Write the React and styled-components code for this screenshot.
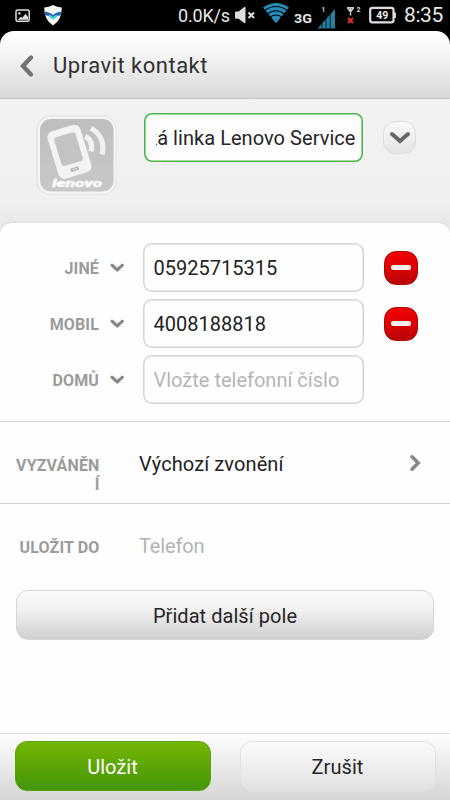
import React from "react";
import styled, { createGlobalStyle } from "styled-components";

const GlobalStyle = createGlobalStyle`
  *, *::before, *::after { box-sizing: border-box; }
  body { margin: 0; background: #000; font-family: Roboto, "Noto Sans", sans-serif; }
  button, input { font-family: inherit; margin: 0; }
  svg { display: block; flex: none; }
`;

const Screen = styled.div`
  display: flex;
  flex-direction: column;
  width: 450px;
  height: 800px;
  overflow: hidden;
  background: #000;
  color: #262626;
`;

const StatusBar = styled.div`
  display: flex;
  align-items: center;
  height: 31px;
  flex: none;
  padding: 0 7px 0 15px;
  color: #e8e8e8;
`;

const Notifications = styled.div`
  display: flex;
  gap: 13px;
  flex: 1;
`;

const Speed = styled.span`
  font-size: 18px;
  line-height: 33px;
  width: 57px;
  white-space: nowrap;
  letter-spacing: -0.2px;
`;

const Clock = styled.span`
  font-size: 21px;
  line-height: 33px;
  width: 39px;
  white-space: nowrap;
  margin-left: 7px;
  letter-spacing: -0.4px;
`;

const Header = styled.header`
  display: flex;
  align-items: center;
  flex: none;
  height: 68px;
  padding: 3px 0 0 19px;
  gap: 18px;
  border-radius: 14px 14px 0 0;
  border-bottom: 1px solid #c6c6c6;
  background: linear-gradient(#fff, #f5f5f5 35%, #d7d7d7);
`;

const Title = styled.h1`
  margin: 0;
  font-size: 22px;
  font-weight: 400;
  line-height: 28px;
  color: #303030;
  white-space: nowrap;
  letter-spacing: 0.5px;
`;

const Content = styled.main`
  display: flex;
  flex-direction: column;
  flex: 1;
  background: linear-gradient(#f2f2f2, #f0f0f0 100px, #e9e9e9 124px);
`;

const Profile = styled.section`
  display: flex;
  align-items: flex-start;
  height: 124px;
  flex: none;
  padding: 14px 0 0 35px;
`;

const NameField = styled.div`
  display: flex;
  justify-content: flex-end;
  align-items: center;
  width: 219px;
  height: 49px;
  margin-left: 26.5px;
  padding: 0 7px 0 10px;
  border-radius: 8px;
  box-shadow: inset 0 0 0 1.6px #4cb748;
  background: #fdfdfd;
`;

const NameClip = styled.div`
  display: flex;
  justify-content: flex-end;
  width: 200px;
  overflow: hidden;
  font-size: 20px;
  line-height: 28px;
  white-space: nowrap;
  letter-spacing: 0.05px;
`;

const RoundButton = styled.button`
  display: flex;
  align-items: center;
  justify-content: center;
  width: 33px;
  height: 33px;
  margin: 8px 0 0 20.5px;
  padding: 0;
  border: 1px solid #dcdcdc;
  border-radius: 12px;
  background: linear-gradient(#f9f9f9, #e5e5e5);
`;

const Card = styled.section`
  display: flex;
  flex-direction: column;
  flex: 1;
  border-radius: 12px 12px 0 0;
  background: #fefefe;
  box-shadow: 0 -1px 3px rgba(0, 0, 0, 0.05);
`;

const Phones = styled.div`
  display: grid;
  row-gap: 7.2px;
  height: 199px;
  align-content: start;
  padding-top: 20px;
  border-bottom: 1px solid #d2d2d2;
`;

const PhoneRow = styled.div`
  display: grid;
  grid-template-columns: 99px 43.5px 221px 34px;
  align-items: center;
  height: 49px;
`;

const Label = styled.span`
  font-size: 16px;
  font-weight: 700;
  line-height: 19px;
  padding-top: 1px;
  color: #9b9b9b;
  text-align: right;
  overflow-wrap: anywhere;
  letter-spacing: 0.15px;
`;

const ChevronCell = styled.span`
  display: flex;
  padding: 1px 0 0 11px;
`;

const PhoneInput = styled.input`
  width: 221px;
  height: 49px;
  padding: 1px 11px 0;
  border: 0;
  border-radius: 9px;
  box-shadow: inset 0 0 0 1.5px #d4d4d4;
  outline: none;
  background: #fefefe;
  color: #222;
  font-size: 20px;
  &::placeholder { color: #b5b5b5; opacity: 1; }
`;

const RemoveButton = styled.button`
  display: flex;
  align-items: center;
  justify-content: center;
  width: 34px;
  height: 34px;
  margin-left: 20.5px;
  padding: 0;
  border: 1px solid #b80508;
  border-radius: 12px;
  background: linear-gradient(#ee0205, #e00205 40%, #b90308);
`;

const RemoveBar = styled.span`
  width: 20px;
  height: 5px;
  border-radius: 2px;
  background: #fbeeee;
`;

const OptionRow = styled.div`
  display: flex;
  align-items: flex-start;
  height: ${(p) => p.$height};
  padding: ${(p) => p.$pad} 28px 0 14px;
  border-bottom: ${(p) => (p.$divider ? "1px solid #d2d2d2" : "0")};
`;

const OptionLabel = styled(Label)`
  width: 85.5px;
  margin-top: 5px;
`;

const OptionValue = styled.span`
  flex: 1;
  margin-left: 39.5px;
  font-size: 20px;
  line-height: 28px;
  color: ${(p) => (p.$muted ? "#b3b3b3" : "#222")};
  letter-spacing: ${(p) => (p.$muted ? "-0.15px" : "0.1px")};
`;

const Trailing = styled.span`
  margin-top: 4px;
`;

const Button = styled.button`
  height: 50px;
  padding: 1px 0 0;
  border: 1px solid ${(p) => (p.$primary ? "#59a308" : p.$soft ? "#e1e1e1" : "#d5d5d5")};
  border-radius: 12px;
  color: ${(p) => (p.$primary ? "#fff" : "#262626")};
  font-size: 20px;
  line-height: 28px;
  letter-spacing: 0.05px;
  background: ${(p) =>
    p.$primary
      ? "linear-gradient(#75b603, #43950a)"
      : p.$soft
        ? "linear-gradient(#fbfbfb, #e1e1e1)"
        : "linear-gradient(#fbfbfb, #f0f0f0 40%, #d0d0d0)"};
`;

const AddButton = styled(Button)`
  margin: 0 16px;
  padding-top: 2px;
`;

const Footer = styled.footer`
  display: grid;
  grid-template-columns: 196px 196px;
  column-gap: 29px;
  flex: none;
  height: 67px;
  padding: 7px 14px 0 14.5px;
  border-top: 1px solid #dedede;
  background: linear-gradient(#fefefe, #d5d5d5);
`;

const Chevron = ({ size, points, color, stroke }) => (
  <svg width={size[0]} height={size[1]} fill="none">
    <polyline points={points} stroke={color} strokeWidth={stroke} strokeLinecap="round" strokeLinejoin="miter" />
  </svg>
);

const PictureIcon = () => (
  <svg width="16" height="31" viewBox="0 0 16 31">
    <rect x="1" y="10" width="13.2" height="11.2" rx="1.5" fill="none" stroke="#ddd" strokeWidth="1.5" />
    <circle cx="4.4" cy="13.4" r="1.2" fill="#ddd" />
    <path d="M2.5 19.8 L6 16.7 L7.4 17.7 L10.5 13.8 L13 17 V19.8 Z" fill="#ddd" />
  </svg>
);

const ShieldIcon = () => (
  <svg width="19" height="31" viewBox="0 0 19 31">
    <path d="M.2 7.5 Q5 7 9 5 Q13 7 17.8 7.5 Q18 20 9 25.5 Q0 20 .2 7.5Z" fill="#f2f5f5" />
    <path d="M.4 11.5 Q6 12 9 15 Q12 12 17.6 11.5 L17 15 Q12 15.5 9 18.5 Q6 15.5 1 15Z" fill="#2b5ca8" />
    <path d="M4 14.8 Q7.4 15 9 16.8 Q10.6 15 14 14.8 Q12 18 9 19.5 Q6 18 4 14.8Z" fill="#31d6e6" />
  </svg>
);

const SystemIcons = () => (
  <svg width="162" height="31" viewBox="235 0 162 31">
    <path d="M235 12.5 Q235 11.5 236 11.5 H238.5 L244.3 7 Q245.5 6.3 245.5 8 V22 Q245.5 23.8 244.3 23 L238.5 18.8 H236 Q235 18.8 235 17.8Z" fill="#ddd" />
    <path d="M248.5 12.5 L254 18 M254 12.5 L248.5 18" stroke="#ddd" strokeWidth="2" />
    <path d="M263 7.5 Q276 -1.5 289 7.5 L276 23.3Z" fill="#258db8" />
    <g fill="none" stroke="#020608" strokeWidth="1.1">
      <path d="M264 11 Q276 2 288 11" />
      <path d="M266.5 14.5 Q276 7 285.5 14.5" />
      <path d="M269 18 Q276 12 283 18" />
    </g>
    <text x="294" y="22.7" fill="#e5e5e5" fontFamily="Roboto, sans-serif" fontSize="13" fontWeight="700" textLength="18" lengthAdjust="spacingAndGlyphs">3G</text>
    <text x="321.5" y="11.5" fill="#ddd" fontFamily="Roboto, sans-serif" fontSize="6.5" fontWeight="700">1</text>
    <path d="M317.5 28.5 L335 9 V28.5Z" fill="#277f9f" />
    <path d="M322 23 V29 M326 18 V29 M330.2 13 V29" stroke="#020608" strokeWidth="0.8" />
    <path d="M347 7.8 H354 M350.5 8 V15.5 M347.7 8 L350.5 12 L353.4 8" fill="none" stroke="#ccc" strokeWidth="1.5" />
    <text x="356.5" y="12" fill="#ddd" fontFamily="Roboto, sans-serif" fontSize="7" fontWeight="700">2</text>
    <path d="M348 18 L353 23 M353 18 L348 23" stroke="#e52d30" strokeWidth="2" />
    <rect x="370.2" y="7.9" width="23.3" height="14.5" rx="2.2" fill="none" stroke="#dedede" strokeWidth="2.2" />
    <path d="M394.8 12.5 V18" stroke="#dedede" strokeWidth="2.2" />
    <text x="376.3" y="19.2" fill="#eee" fontFamily="Roboto, sans-serif" fontSize="10.5" fontWeight="700">49</text>
  </svg>
);

const Avatar = () => (
  <svg width="82" height="84" viewBox="35 113 82 84">
    <defs>
      <linearGradient id="tile" x1="0" y1="0" x2="0" y2="1">
        <stop stopColor="#bebebe" />
        <stop offset="1" stopColor="#c8c8c8" />
      </linearGradient>
    </defs>
    <rect x="36" y="115" width="81" height="80.5" rx="15" fill="#e8e8e8" />
    <rect x="38" y="116.7" width="77.5" height="77" rx="13" fill="#f5f5f5" />
    <rect x="40" y="119" width="73.5" height="72.5" rx="11" fill="url(#tile)" />
    <g transform="rotate(-17 69.3 151.5)">
      <rect x="52.2" y="127" width="34.3" height="49.6" rx="6.5" fill="#f3f3f3" />
      <rect x="58.2" y="134" width="22.2" height="30" rx="3.2" fill="#c3c3c3" />
      <rect x="65" y="168.2" width="8.5" height="3.7" rx="1" fill="#b5b5b5" />
      <rect x="67" y="169.4" width="5" height="1.2" fill="#dedede" />
    </g>
    <g fill="none" stroke="#f0f0f0" strokeWidth="5.2">
      <path d="M85.2 136.4 Q93.6 140.5 91 151.5" />
      <path d="M91 128.2 Q105.6 136.5 102.2 154.5" />
    </g>
    <text x="52" y="186.8" fill="#fafafa" stroke="#fafafa" strokeWidth="0.4" fontFamily="Roboto, sans-serif" fontSize="11" fontStyle="italic" fontWeight="900" textLength="50" lengthAdjust="spacingAndGlyphs">lenovo</text>
  </svg>
);

const phones = [
  { label: "JINÉ", value: "05925715315" },
  { label: "MOBIL", value: "4008188818" },
  { label: "DOMŮ", value: "" },
];

export default function App() {
  return (
    <>
      <GlobalStyle />
      <Screen>
        <StatusBar>
          <Notifications>
            <PictureIcon />
            <ShieldIcon />
          </Notifications>
          <Speed>0.0K/s</Speed>
          <SystemIcons />
          <Clock>8:35</Clock>
        </StatusBar>
        <Header>
          <Chevron size={[16, 24]} points="12,3.5 4,12 12,20.5" color="#747474" stroke={4.4} />
          <Title>Upravit kontakt</Title>
        </Header>
        <Content>
          <Profile>
            <Avatar />
            <NameField>
              <NameClip>ká linka Lenovo Service</NameClip>
            </NameField>
            <RoundButton aria-label="Více">
              <Chevron size={[22, 14]} points="3,3 11,10 19,3" color="#686868" stroke={4} />
            </RoundButton>
          </Profile>
          <Card>
            <Phones>
              {phones.map(({ label, value }) => (
                <PhoneRow key={label}>
                  <Label>{label}</Label>
                  <ChevronCell>
                    <Chevron size={[14, 10]} points="2,2.2 7.2,6.9 12.4,2.2" color="#858585" stroke={3} />
                  </ChevronCell>
                  <PhoneInput defaultValue={value} placeholder="Vložte telefonní číslo" />
                  {value && (
                    <RemoveButton aria-label="Odebrat">
                      <RemoveBar />
                    </RemoveButton>
                  )}
                </PhoneRow>
              ))}
            </Phones>
            <OptionRow $height="82px" $pad="28px" $divider>
              <OptionLabel>VYZVÁNĚNÍ</OptionLabel>
              <OptionValue>Výchozí zvonění</OptionValue>
              <Trailing>
                <Chevron size={[13, 18]} points="3,2.8 9.2,9 3,15.2" color="#888" stroke={3.6} />
              </Trailing>
            </OptionRow>
            <OptionRow $height="86px" $pad="28px">
              <OptionLabel>ULOŽIT DO</OptionLabel>
              <OptionValue $muted>Telefon</OptionValue>
            </OptionRow>
            <AddButton>Přidat další pole</AddButton>
          </Card>
        </Content>
        <Footer>
          <Button $primary>Uložit</Button>
          <Button $soft>Zrušit</Button>
        </Footer>
      </Screen>
    </>
  );
}
